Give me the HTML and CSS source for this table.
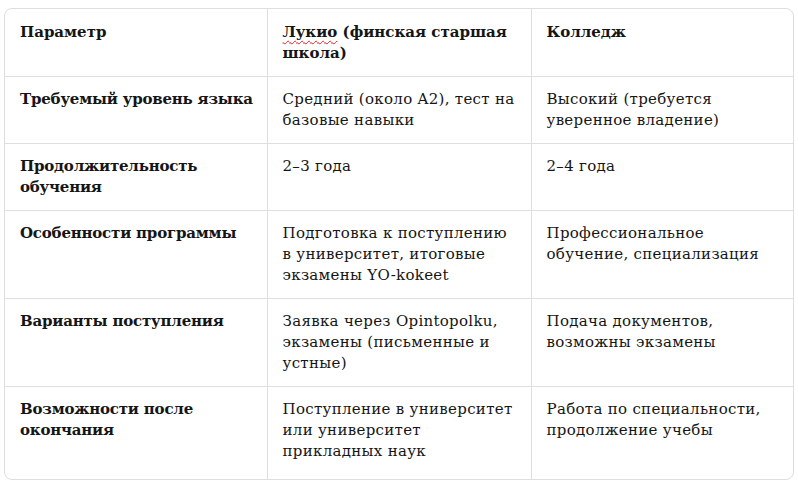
FILE: index.html
```html
<!DOCTYPE html>
<html lang="ru">
<head>
<meta charset="utf-8">
<link rel="stylesheet" href="styles.css">
</head>
<body>
<div class="wrap">
<table class="grid">
<colgroup><col class="c1"><col class="c2"><col class="c3"></colgroup>
<thead>
<tr><th>Параметр</th><th><span class="spell">Лукио</span> (финская старшая школа)</th><th>Колледж</th></tr>
</thead>
<tbody>
<tr><td class="label">Требуемый уровень языка</td><td>Средний (около A2), тест на базовые навыки</td><td>Высокий (требуется уверенное владение)</td></tr>
<tr><td class="label">Продолжительность обучения</td><td>2–3 года</td><td>2–4 года</td></tr>
<tr><td class="label">Особенности программы</td><td>Подготовка к поступлению в университет, итоговые экзамены YO-kokeet</td><td>Профессиональное обучение, специализация</td></tr>
<tr><td class="label">Варианты поступления</td><td>Заявка через Opintopolku, экзамены (письменные и устные)</td><td>Подача документов, возможны экзамены</td></tr>
<tr class="last"><td class="label">Возможности после окончания</td><td>Поступление в университет или университет прикладных наук</td><td>Работа по специальности, продолжение учебы</td></tr>
</tbody>
</table>
</div>
</body>
</html>
```
FILE: styles.css
```css
html, body { background: #ffffff; }
body {
  margin: 8px 4px 0 4px;
  font-family: "DejaVu Serif", serif;
  font-size: 15px;
  color: #151515;
}
.wrap {
  border: 1px solid #dedede;
  border-radius: 8px;
  overflow: hidden;
}
.grid {
  width: 100%;
  border-collapse: collapse;
  table-layout: fixed;
}
.c1 { width: 262px; }
.c2 { width: 264px; }
.c3 { width: auto; }
.grid th, .grid td {
  text-align: left;
  vertical-align: top;
  padding: 12px 13px 12px 15px;
  line-height: 21px;
  letter-spacing: 0.3px;
  border-left: 1px solid #dedede;
  border-top: 1px solid #dedede;
}
.grid th:first-child, .grid td:first-child { border-left: none; }
.grid thead th {
  border-top: none;
  font-weight: 700;
  letter-spacing: 0;
  padding-top: 13px;
  padding-right: 8px;
}
.grid td.label { font-weight: 700; letter-spacing: -0.2px; padding-right: 8px; }
.grid .last td { padding-bottom: 17px; }
.spell {
  text-decoration: underline wavy #e02020;
  text-decoration-thickness: 1px;
  text-underline-offset: 3px;
}
```
